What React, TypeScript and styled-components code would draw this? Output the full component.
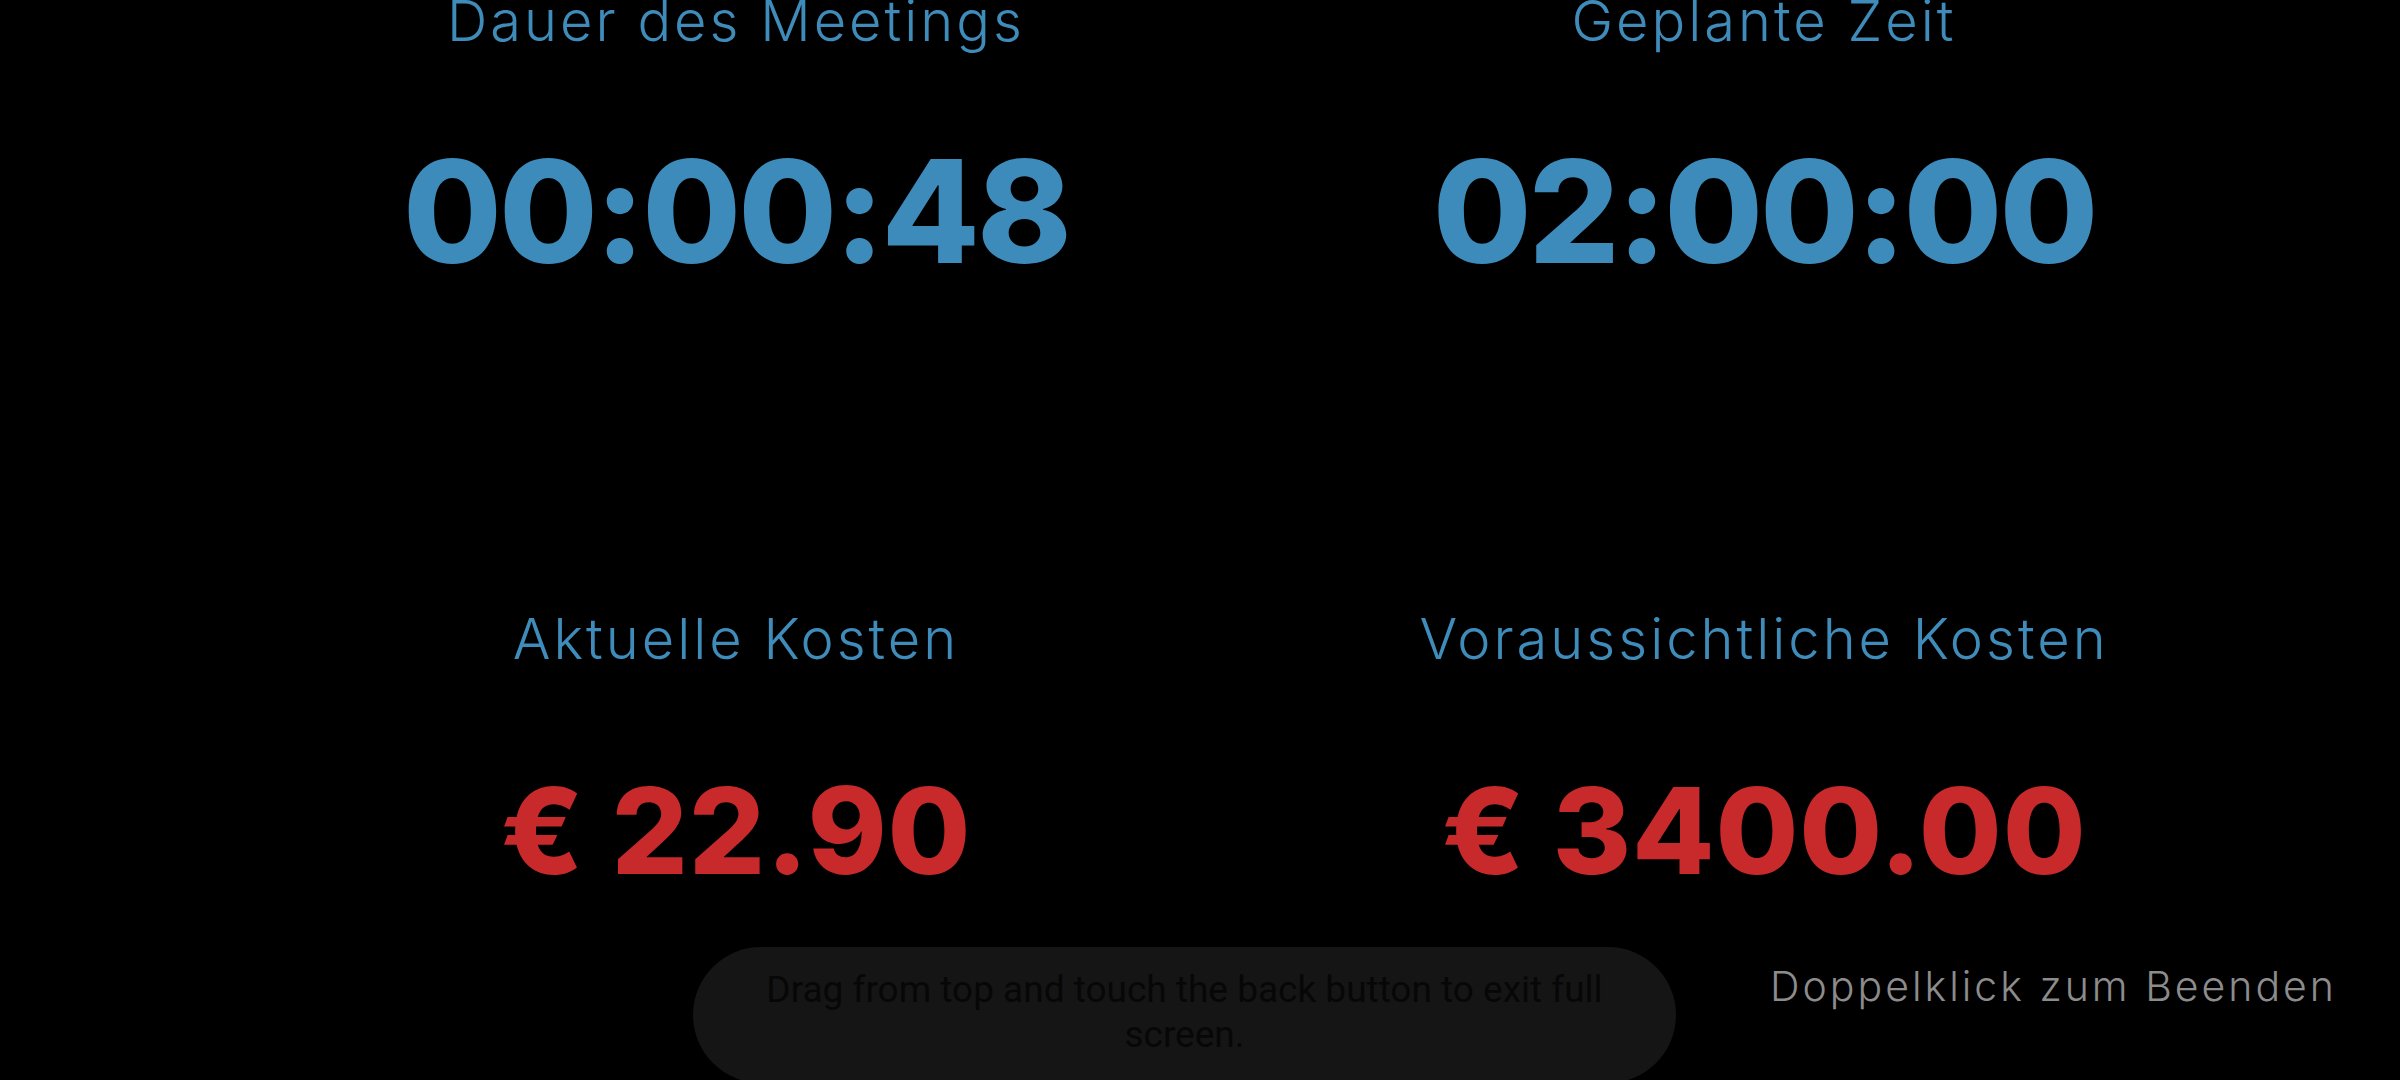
import React from "react";
import styled, { createGlobalStyle } from "styled-components";

const GlobalStyle = createGlobalStyle`
  html, body {
    margin: 0;
    padding: 0;
    background: #000000;
  }
  body {
    font-family: "Inter", "Liberation Sans", sans-serif;
  }
`;

const Screen = styled.div`
  position: relative;
  width: 100vw;
  height: 100vh;
  overflow: hidden;
  background: #000000;
  display: flex;
  flex-direction: column;
`;

const Board = styled.div`
  display: grid;
  grid-template-columns: 1028px 1028px;
  row-gap: 327px;
  margin-top: -9px;
  padding-left: 222px;
`;

const Cell = styled.div`
  display: flex;
  flex-direction: column;
  align-items: center;
  text-align: center;
`;

const Label = styled.div`
  font-family: "Inter", "Liberation Sans", sans-serif;
  font-weight: 300;
  font-size: 56px;
  line-height: 60px;
  letter-spacing: 3px;
  color: #3f8cbb;
  white-space: nowrap;
`;

const Value = styled.div<{ $tone: "time" | "cost" }>`
  font-family: "Inter", "Liberation Sans", sans-serif;
  font-weight: 800;
  white-space: nowrap;
  font-size: ${(p) => (p.$tone === "time" ? "143px" : "120px")};
  line-height: ${(p) => (p.$tone === "time" ? "143px" : "120px")};
  margin-top: ${(p) => (p.$tone === "time" ? "88px" : "102px")};
  letter-spacing: ${(p) => (p.$tone === "time" ? "-3px" : "0.8px")};
  color: ${(p) => (p.$tone === "time" ? "#3d8bba" : "#c8292b")};
`;

const Footer = styled.div`
  margin-top: auto;
  display: flex;
  justify-content: flex-end;
  padding: 0 63px 69px 0;
`;

const ExitHint = styled.div`
  font-family: "Inter", "Liberation Sans", sans-serif;
  font-weight: 300;
  font-size: 41px;
  line-height: 50px;
  letter-spacing: 3px;
  color: #8c8c8c;
`;

// system toast that lies over the page
const Toast = styled.div`
  position: absolute;
  left: 693px;
  top: 947px;
  width: 983px;
  height: 136px;
  box-sizing: border-box;
  padding: 20px 50px 0;
  border-radius: 68px;
  background: #151515;
  font-family: Roboto, "Liberation Sans", sans-serif;
  font-size: 37px;
  line-height: 45px;
  color: #070707;
  text-align: center;
`;

const stats = [
  { label: "Dauer des Meetings", value: "00:00:48", tone: "time" as const },
  { label: "Geplante Zeit", value: "02:00:00", tone: "time" as const },
  { label: "Aktuelle Kosten", value: "€ 22.90", tone: "cost" as const },
  { label: "Voraussichtliche Kosten", value: "€ 3400.00", tone: "cost" as const },
];

const App: React.FC = () => {
  return (
    <Screen>
      <GlobalStyle />
      <Board>
        {stats.map((s) => (
          <Cell key={s.label}>
            <Label>{s.label}</Label>
            <Value $tone={s.tone}>{s.value}</Value>
          </Cell>
        ))}
      </Board>
      <Footer>
        <ExitHint>Doppelklick zum Beenden</ExitHint>
      </Footer>
      <Toast>Drag from top and touch the back button to exit full screen.</Toast>
    </Screen>
  );
};

export default App;
